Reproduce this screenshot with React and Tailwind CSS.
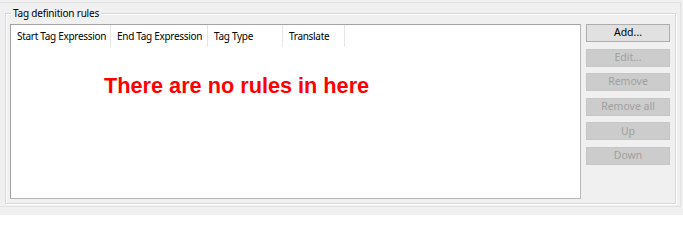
import React from "react";

const cols = [
  { label: "Start Tag Expression", w: "w-[100px]" },
  { label: "End Tag Expression", w: "w-[97px]" },
  { label: "Tag Type", w: "w-[75px]" },
  { label: "Translate", w: "w-[62px]" },
];

const buttons = [
  { label: "Add...", enabled: true },
  { label: "Edit...", enabled: false },
  { label: "Remove", enabled: false },
  { label: "Remove all", enabled: false },
  { label: "Up", enabled: false },
  { label: "Down", enabled: false },
];

export default function App() {
  return (
    <div
      className="w-[683px] h-[215px] bg-[#f0f0f0] pt-[2px] overflow-hidden"
      style={{ fontFamily: '"Noto Sans", "Open Sans", sans-serif' }}
    >
      <div className="w-[681px] h-[205px] border-t border-r border-b border-[#e2e2e2] pt-[10px]">
        <div className="relative ml-[5px] w-[671px] h-[191px] border border-[#d8d8d8] shadow-[inset_1px_1px_0_#ffffff,1px_1px_0_#ffffff]">
          <div className="absolute -top-[8px] left-[5px] bg-[#f0f0f0] px-[2px] text-[10px] tracking-[-0.2px] leading-[14px] text-[#000]">
            Tag definition rules
          </div>
          <div className="flex pl-[4px] pt-[10px]">
            <div className="w-[571px] h-[175px] bg-white border border-[#a3a3a3] border-r-[#b8b8b8] border-b-[#b8b8b8] flex flex-col">
              <div className="flex h-[22px]">
                {cols.map((c) => (
                  <div
                    key={c.label}
                    className={`${c.w} h-full border-r border-[#e5e5e5] pl-[6px] flex items-center text-[10px] tracking-[-0.3px] text-[#000] whitespace-nowrap`}
                  >
                    {c.label}
                  </div>
                ))}
              </div>
              <div className="pl-[93px] pt-[28px]">
                <div
                  className="text-[21.7px] leading-[22px] font-bold text-[#ff0000]"
                  style={{ fontFamily: '"Liberation Sans", Arial, sans-serif' }}
                >
                  There are no rules in here
                </div>
              </div>
            </div>
            <div className="ml-[5px] w-[84px] flex flex-col gap-[6.6px]">
              {buttons.map((b) =>
                b.enabled ? (
                  <div
                    key={b.label}
                    className="h-[18px] border border-[#adadad] bg-[#e1e1e1] flex items-center justify-center text-[10.5px] text-[#000]"
                  >
                    {b.label}
                  </div>
                ) : (
                  <div
                    key={b.label}
                    className="h-[18px] border border-[#c6c6c6] bg-[#cccccc] flex items-center justify-center text-[10.5px] text-[#a0a0a0]"
                  >
                    {b.label}
                  </div>
                )
              )}
            </div>
          </div>
        </div>
      </div>
    </div>
  );
}
